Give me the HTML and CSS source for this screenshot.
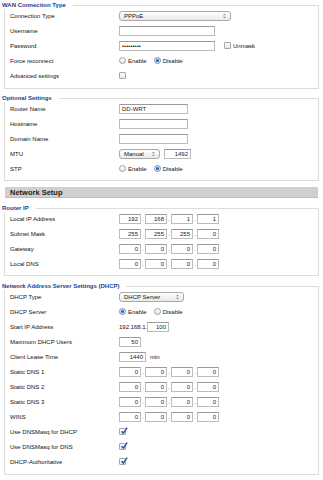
FILE: index.html
```html
<!DOCTYPE html>
<html lang="en">
<head>
    <meta charset="UTF-8">
    <meta name="viewport" content="width=device-width, initial-scale=1.0">
    <link rel="stylesheet" href="styles.css">
    <title>Setup - Basic Setup</title>
</head>
<body>
    <!-- WAN -->
    <fieldset class="group group-wan">
        <legend>WAN Connection Type</legend>
        <div class="row">
            <span class="label">Connection Type</span>
            <div class="field">
                <span class="select sel-conn">PPPoE<svg class="arrows" viewBox="0 0 4 7"><path d="M0.6 2.6 L2 1.1 L3.4 2.6 M0.6 4.4 L2 5.9 L3.4 4.4"/></svg></span>
            </div>
        </div>
        <div class="row">
            <span class="label">Username</span>
            <div class="field"><input class="text txt-user" type="text" value=""></div>
        </div>
        <div class="row">
            <span class="label">Password</span>
            <div class="field">
                <input class="text txt-user" type="password" value="password1">
                <span class="check unmask"></span><span class="opt">Unmask</span>
            </div>
        </div>
        <div class="row">
            <span class="label">Force reconnect</span>
            <div class="field">
                <span class="radio"></span><span class="opt">Enable</span>
                <span class="radio on"></span><span class="opt">Disable</span>
            </div>
        </div>
        <div class="row">
            <span class="label">Advanced settings</span>
            <div class="field"><span class="check"></span></div>
        </div>
    </fieldset>

    <!-- Optional -->
    <fieldset class="group">
        <legend>Optional Settings</legend>
        <div class="row">
            <span class="label">Router Name</span>
            <div class="field"><input class="text txt-name" type="text" value="DD-WRT"></div>
        </div>
        <div class="row">
            <span class="label">Hostname</span>
            <div class="field"><input class="text txt-name" type="text" value=""></div>
        </div>
        <div class="row">
            <span class="label">Domain Name</span>
            <div class="field"><input class="text txt-name" type="text" value=""></div>
        </div>
        <div class="row">
            <span class="label">MTU</span>
            <div class="field">
                <span class="select sel-mtu">Manual<svg class="arrows" viewBox="0 0 4 7"><path d="M0.6 2.6 L2 1.1 L3.4 2.6 M0.6 4.4 L2 5.9 L3.4 4.4"/></svg></span>
                <input class="text num txt-mtu" type="text" value="1492">
            </div>
        </div>
        <div class="row">
            <span class="label">STP</span>
            <div class="field">
                <span class="radio"></span><span class="opt">Enable</span>
                <span class="radio on"></span><span class="opt">Disable</span>
            </div>
        </div>
    </fieldset>

    <h2 class="section">Network Setup</h2>

    <!-- Router IP -->
    <fieldset class="group group-ip">
        <legend>Router IP</legend>
        <div class="row">
            <span class="label">Local IP Address</span>
            <div class="field ip"><span class="box">192</span><span class="dot">.</span><span class="box">168</span><span class="dot">.</span><span class="box">1</span><span class="dot">.</span><span class="box">1</span></div>
        </div>
        <div class="row">
            <span class="label">Subnet Mask</span>
            <div class="field ip"><span class="box">255</span><span class="dot">.</span><span class="box">255</span><span class="dot">.</span><span class="box">255</span><span class="dot">.</span><span class="box">0</span></div>
        </div>
        <div class="row">
            <span class="label">Gateway</span>
            <div class="field ip"><span class="box">0</span><span class="dot">.</span><span class="box">0</span><span class="dot">.</span><span class="box">0</span><span class="dot">.</span><span class="box">0</span></div>
        </div>
        <div class="row">
            <span class="label">Local DNS</span>
            <div class="field ip"><span class="box">0</span><span class="dot">.</span><span class="box">0</span><span class="dot">.</span><span class="box">0</span><span class="dot">.</span><span class="box">0</span></div>
        </div>
    </fieldset>

    <!-- DHCP -->
    <fieldset class="group group-dhcp">
        <legend>Network Address Server Settings (DHCP)</legend>
        <div class="row">
            <span class="label">DHCP Type</span>
            <div class="field">
                <span class="select sel-dhcp">DHCP Server<svg class="arrows" viewBox="0 0 4 7"><path d="M0.6 2.6 L2 1.1 L3.4 2.6 M0.6 4.4 L2 5.9 L3.4 4.4"/></svg></span>
            </div>
        </div>
        <div class="row">
            <span class="label">DHCP Server</span>
            <div class="field">
                <span class="radio on"></span><span class="opt">Enable</span>
                <span class="radio"></span><span class="opt">Disable</span>
            </div>
        </div>
        <div class="row">
            <span class="label">Start IP Address</span>
            <div class="field"><span class="prefix">192.168.1.</span><span class="box">100</span></div>
        </div>
        <div class="row">
            <span class="label">Maximum DHCP Users</span>
            <div class="field"><span class="box">50</span></div>
        </div>
        <div class="row">
            <span class="label">Client Lease Time</span>
            <div class="field"><span class="box box-lease">1440</span><span class="unit">min</span></div>
        </div>
        <div class="row">
            <span class="label">Static DNS 1</span>
            <div class="field ip"><span class="box">0</span><span class="dot">.</span><span class="box">0</span><span class="dot">.</span><span class="box">0</span><span class="dot">.</span><span class="box">0</span></div>
        </div>
        <div class="row">
            <span class="label">Static DNS 2</span>
            <div class="field ip"><span class="box">0</span><span class="dot">.</span><span class="box">0</span><span class="dot">.</span><span class="box">0</span><span class="dot">.</span><span class="box">0</span></div>
        </div>
        <div class="row">
            <span class="label">Static DNS 3</span>
            <div class="field ip"><span class="box">0</span><span class="dot">.</span><span class="box">0</span><span class="dot">.</span><span class="box">0</span><span class="dot">.</span><span class="box">0</span></div>
        </div>
        <div class="row">
            <span class="label">WINS</span>
            <div class="field ip"><span class="box">0</span><span class="dot">.</span><span class="box">0</span><span class="dot">.</span><span class="box">0</span><span class="dot">.</span><span class="box">0</span></div>
        </div>
        <div class="row">
            <span class="label">Use DNSMasq for DHCP</span>
            <div class="field"><span class="check on"><svg viewBox="0 0 8 8"><path d="M1.6 4.2 L3.3 6.2 L7.2 0.6"/></svg></span></div>
        </div>
        <div class="row">
            <span class="label">Use DNSMasq for DNS</span>
            <div class="field"><span class="check on"><svg viewBox="0 0 8 8"><path d="M1.6 4.2 L3.3 6.2 L7.2 0.6"/></svg></span></div>
        </div>
        <div class="row">
            <span class="label">DHCP-Authoritative</span>
            <div class="field"><span class="check on"><svg viewBox="0 0 8 8"><path d="M1.6 4.2 L3.3 6.2 L7.2 0.6"/></svg></span></div>
        </div>
    </fieldset>
</body>
</html>
```

FILE: styles.css
```css
body {
    margin: 0;
    padding-top: 1px;
    background-color: #fff;
    font-family: "Liberation Sans", Arial, sans-serif;
    font-size: 6px;
    color: #111;
}

/* groups */
.group {
    margin: 0 4px 5px 4px;
    padding: 0 0 4px 5px;
    border: 1px solid #dcdcdc;
    min-width: 0;
}
.group-wan {
    padding-bottom: 5px;
}
.group-ip {
    margin-bottom: 6px;
}
.group-dhcp {
    padding-bottom: 5px;
}
.group legend {
    margin-left: -8px;
    margin-bottom: -1px;
    padding: 0 7px 0 0;
    font-weight: bold;
    font-size: 6px;
    line-height: 8px;
    color: #23418e;
    background-color: #fff;
}

/* title bar */
.section {
    margin: 6px 5px 6px 5px;
    height: 11px;
    padding-left: 5px;
    background-color: #d0d0d0;
    border-bottom: 1px solid #bdbdbd;
    font-size: 7.5px;
    line-height: 11px;
    font-weight: bold;
    color: #1a1a1a;
    box-sizing: border-box;
}

.row {
    display: grid;
    grid-template-columns: 109px 1fr;
    align-items: center;
    height: 15px;
}
.label {
    white-space: nowrap;
}
.field {
    display: flex;
    align-items: center;
}

/* text inputs */
.text, .box {
    height: 10px;
    box-sizing: border-box;
    border: 1px solid #bcbcbc;
    border-top-color: #9a9a9a;
    background-color: #fff;
    font-family: "Liberation Sans", Arial, sans-serif;
    font-size: 6px;
    color: #222;
    padding: 0 2px;
    margin: 0;
    outline: none;
}
.txt-user {
    width: 96px;
}
.txt-name {
    width: 69px;
}
.txt-mtu {
    width: 27px;
    margin-left: 4px;
    text-align: right;
}
.box {
    display: inline-flex;
    align-items: center;
    justify-content: flex-end;
    width: 22px;
}
.box-lease {
    width: 27px;
}
.dot {
    width: 4px;
    text-align: center;
    color: #444;
}
.prefix {
    width: 28px;
}
.unit {
    margin-left: 4px;
}

/* selects */
.select {
    display: inline-flex;
    align-items: center;
    justify-content: space-between;
    height: 10px;
    box-sizing: border-box;
    padding: 0 4px 0 4px;
    border: 1px solid #a9a9a9;
    border-radius: 3px;
    background: linear-gradient(#ffffff, #e9e9e9);
}
.sel-conn {
    width: 112px;
}
.sel-mtu {
    width: 41px;
}
.sel-dhcp {
    width: 65px;
}
.arrows {
    width: 3px;
    height: 6px;
}
.arrows path {
    fill: none;
    stroke: #333;
    stroke-width: 0.9;
}

/* radios & checks */
.radio {
    width: 7px;
    height: 7px;
    box-sizing: border-box;
    border: 1px solid #a0a0a0;
    border-radius: 50%;
    background: linear-gradient(#fdfdfd, #e6e6e6);
    display: inline-flex;
    align-items: center;
    justify-content: center;
}
.radio.on {
    border-color: #6d8fcf;
    background: #dbe6f8;
}
.radio.on::after {
    content: "";
    width: 3px;
    height: 3px;
    border-radius: 50%;
    background-color: #2d56b0;
}
.opt {
    margin: 0 7px 0 2px;
}
.check {
    width: 7px;
    height: 7px;
    box-sizing: border-box;
    border: 1px solid #a8a8a8;
    border-radius: 1px;
    background: linear-gradient(#fdfdfd, #e8e8e8);
    display: inline-block;
    position: relative;
}
.check svg {
    position: absolute;
    left: 0;
    top: -2px;
    width: 8px;
    height: 8px;
}
.check svg path {
    fill: none;
    stroke: #2a4aa0;
    stroke-width: 1.4;
}
.unmask {
    margin-left: 9px;
}
```
